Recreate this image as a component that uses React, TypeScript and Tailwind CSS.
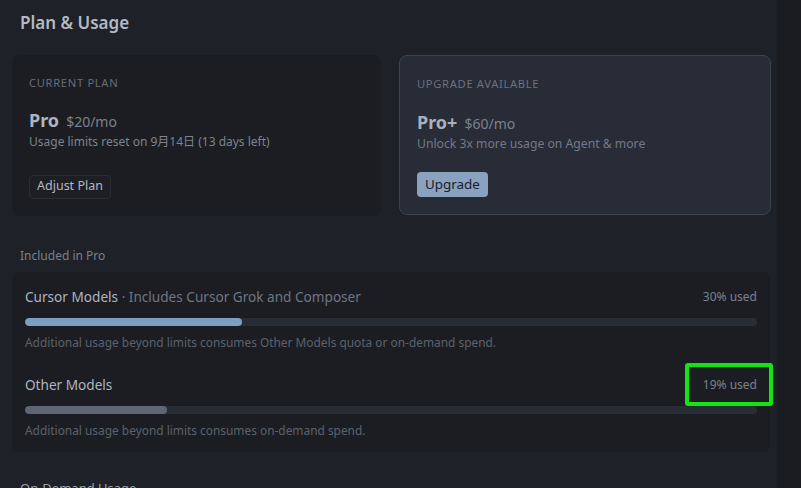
import React from "react";

const font = { fontFamily: '"Noto Sans", "Noto Sans CJK JP", sans-serif' };

function UsageRow({
  title,
  note,
  used,
  pct,
  fill,
  desc,
}: {
  title: string;
  note?: string;
  used: string;
  pct: number;
  fill: string;
  desc: string;
}) {
  return (
    <div className="flex flex-col">
      <div className="flex items-center justify-between h-[20px]">
        <div className="text-[13.6px] text-[#aeb4c0]">
          {title}
          {note && <span className="text-[#6f7581]"> · {note}</span>}
        </div>
        <div className="text-[12px] text-[#7b818b]">{used}</div>
      </div>
      <div className="mt-[11px] h-[8px] rounded-full bg-[#282c34] overflow-hidden">
        <div className={`h-full rounded-full ${fill}`} style={{ width: `${pct}%` }} />
      </div>
      <div className="mt-[8px] h-[16px] leading-[16px] text-[11.9px] text-[#5c626c]">{desc}</div>
    </div>
  );
}

export default function App() {
  return (
    <div
      className="w-[801px] h-[488px] overflow-hidden bg-[#1a1c22] flex"
      style={font}
    >
      <div className="relative w-[777px] h-full bg-[#1e2128] pl-[12px] pr-[6px]">
        <h1 className="pl-[8px] pt-[10px] h-[55px] text-[17px] font-semibold text-[#b3b9c5]">
          Plan &amp; Usage
        </h1>

        <div className="flex gap-[18px]">
          <div className="w-[369px] h-[161px] rounded-[8px] bg-[#1b1d23] px-[17px] pt-[20px]">
            <div className="text-[11.2px] tracking-[0.06em] text-[#676d78]">CURRENT PLAN</div>
            <div className="mt-[15px] flex items-baseline gap-[7px]">
              <span className="text-[18px] font-bold text-[#adb3bf]">Pro</span>
              <span className="text-[14px] text-[#7b818c]">$20/mo</span>
            </div>
            <div className="text-[12px] leading-[18px] text-[#7d838d] -mt-[1px]">
              Usage limits reset on 9月14日 (13 days left)
            </div>
            <button className="mt-[24px] h-[24px] px-[7px] rounded-[4px] border border-[#292c33] bg-[#1d1f25] text-[12.5px] text-[#b3b8c2]">
              Adjust Plan
            </button>
          </div>

          <div className="w-[372px] h-[160px] rounded-[8px] border border-[#3b4250] bg-[#272c36] px-[17px] pt-[20px]">
            <div className="text-[11.2px] tracking-[0.06em] text-[#6b7280]">UPGRADE AVAILABLE</div>
            <div className="mt-[16px] flex items-baseline gap-[7px]">
              <span className="text-[18px] font-bold text-[#a9afbb]">Pro+</span>
              <span className="text-[14px] text-[#7b818c]">$60/mo</span>
            </div>
            <div className="text-[12.2px] leading-[18px] text-[#737a86] -mt-[1px]">
              Unlock 3x more usage on Agent &amp; more
            </div>
            <button className="mt-[19px] h-[25px] px-[8px] rounded-[4px] bg-[#8aa2bf] text-[13.4px] text-[#18202b]">
              Upgrade
            </button>
          </div>
        </div>

        <div className="pl-[8px] mt-[31px] text-[12px] text-[#7a808a]">Included in Pro</div>

        <div className="mt-[7px] w-[758px] h-[180px] rounded-[8px] bg-[#1b1d23] px-[13px] pt-[15px] flex flex-col gap-[25px]">
          <UsageRow
            title="Cursor Models"
            note="Includes Cursor Grok and Composer"
            used="30% used"
            pct={29.6}
            fill="bg-[#7d9dc2]"
            desc="Additional usage beyond limits consumes Other Models quota or on-demand spend."
          />
          <UsageRow
            title="Other Models"
            used="19% used"
            pct={19.4}
            fill="bg-[#5e6574]"
            desc="Additional usage beyond limits consumes on-demand spend."
          />
        </div>

        <div className="pl-[8px] mt-[27px] text-[13px] text-[#9aa0aa]">On-Demand Usage</div>

        <div className="absolute left-[685px] top-[363px] w-[88px] h-[43px] rounded-[3px] border-[4px] border-[#14e314]" />
      </div>
    </div>
  );
}
